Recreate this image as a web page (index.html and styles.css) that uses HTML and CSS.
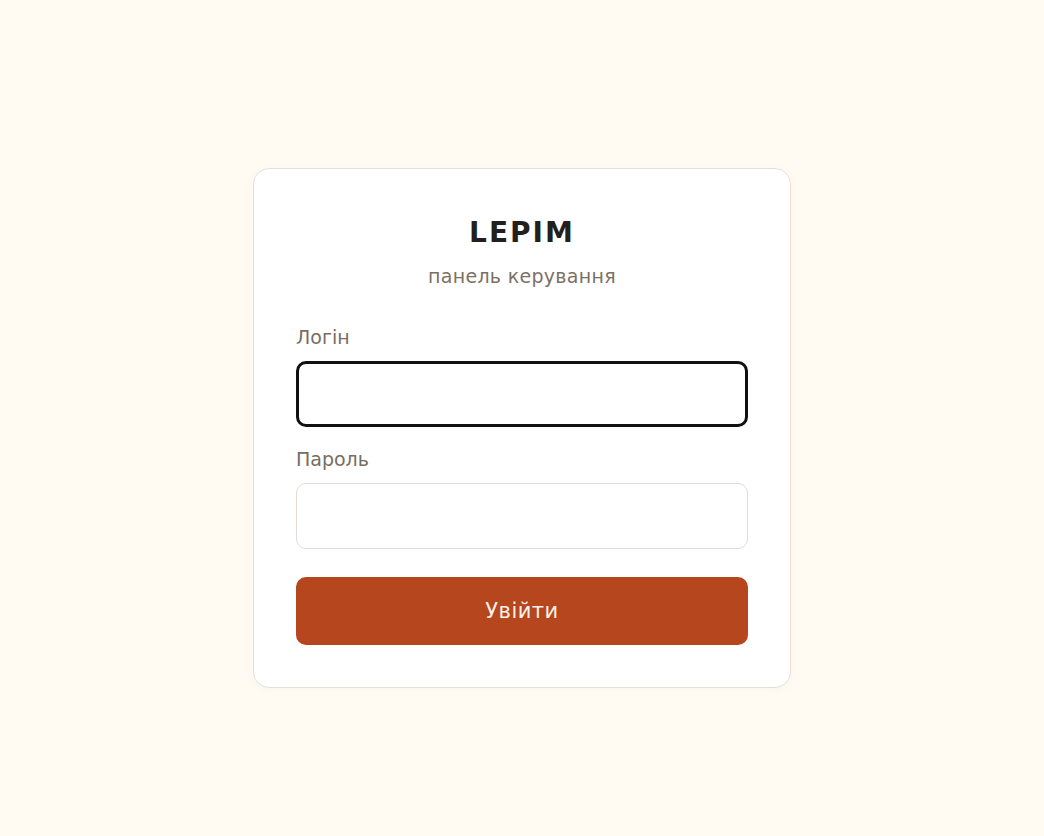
FILE: index.html
```html
<!DOCTYPE html>
<html lang="uk">
<head>
<meta charset="utf-8">
<title>LEPIM — панель керування</title>
<link rel="stylesheet" href="styles.css">
</head>
<body>
<main class="page">
  <form class="card" onsubmit="return false">
    <h1 class="title">LEPIM</h1>
    <p class="subtitle">панель керування</p>
    <label class="label" for="login">Логін</label>
    <input class="field field--focus" id="login" type="text">
    <label class="label label--second" for="password">Пароль</label>
    <input class="field" id="password" type="password">
    <button class="submit" type="submit">Увійти</button>
  </form>
</main>
</body>
</html>
```

FILE: styles.css
```css
* { box-sizing: border-box; }
html, body {
  margin: 0;
  padding: 0;
  background: #fffbf3;
  font-family: "DejaVu Sans", Verdana, sans-serif;
}
.page {
  min-height: 836px;
  padding-top: 20px;
  display: flex;
  align-items: center;
  justify-content: center;
}
.card {
  width: 538px;
  background: #ffffff;
  border: 1px solid #e5e1da;
  border-radius: 16px;
  padding: 42px;
  display: flex;
  flex-direction: column;
  box-shadow: 0 2px 8px rgba(120, 100, 70, 0.04);
}
.title {
  margin: 0;
  text-align: center;
  font-size: 28px;
  line-height: 44px;
  font-weight: 700;
  letter-spacing: 2px;
  color: #231f1b;
}
.subtitle {
  margin: 9px 0 0;
  text-align: center;
  font-size: 19px;
  line-height: 24px;
  letter-spacing: 0.3px;
  color: #7c7064;
}
.label {
  margin-top: 37px;
  margin-bottom: 12px;
  font-size: 19px;
  line-height: 24px;
  color: #786d62;
}
.label--second { margin-top: 20px; }
.field {
  display: block;
  width: 100%;
  height: 66px;
  border: 1px solid #e1ddd6;
  border-radius: 10px;
  background: #fff;
  font: inherit;
  font-size: 17px;
  padding: 0 16px;
  outline: none;
}
.field--focus {
  border: 3px solid #111111;
  border-radius: 10px;
}
.submit {
  margin-top: 28px;
  height: 68px;
  border: none;
  border-radius: 10px;
  background: #b5461d;
  color: #fdf1e8;
  font-family: inherit;
  font-size: 21px;
  letter-spacing: 0.5px;
  cursor: pointer;
}
```
